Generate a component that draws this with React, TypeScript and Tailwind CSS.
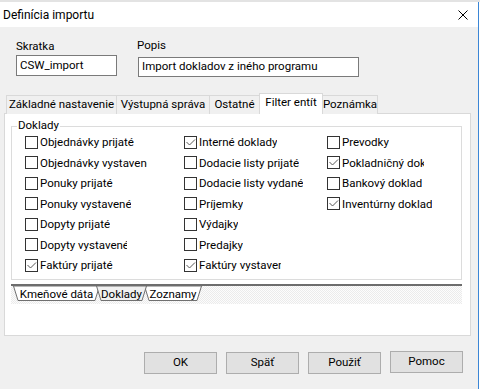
import clsx from "clsx";

type Item = { label: string; checked?: boolean; clip?: string };

const colA: Item[] = [
  { label: "Objednávky prijaté" },
  { label: "Objednávky vystavené", clip: "w-[107px]" },
  { label: "Ponuky prijaté" },
  { label: "Ponuky vystavené" },
  { label: "Dopyty prijaté" },
  { label: "Dopyty vystavené", clip: "w-[87px]" },
  { label: "Faktúry prijaté", checked: true },
];

const colB: Item[] = [
  { label: "Interné doklady", checked: true },
  { label: "Dodacie listy prijaté" },
  { label: "Dodacie listy vydané" },
  { label: "Príjemky" },
  { label: "Výdajky" },
  { label: "Predajky" },
  { label: "Faktúry vystavené", checked: true, clip: "w-[82px]" },
];

const colC: Item[] = [
  { label: "Prevodky" },
  { label: "Pokladničný doklad", checked: true, clip: "w-[82px]" },
  { label: "Bankový doklad" },
  { label: "Inventúrny doklad", checked: true },
];

function CheckBox({ label, checked, clip }: Item) {
  return (
    <div className="flex h-[20.5px] items-center">
      <span className="flex h-[13px] w-[13px] shrink-0 items-center justify-center border border-[#333333] bg-white">
        {checked && (
          <svg width="11" height="11" viewBox="0 0 11 11">
            <path d="M1.5 5 L4.5 8 L10 2.5" fill="none" stroke="#5a5a5a" strokeWidth="1" />
          </svg>
        )}
      </span>
      <span className={clsx("ml-[2px] overflow-hidden whitespace-nowrap leading-[14px]", clip)}>{label}</span>
    </div>
  );
}

function TopTab({ label, width, active, last }: { label: string; width: string; active?: boolean; last?: boolean }) {
  if (active) {
    return (
      <div
        className={clsx(
          "relative z-10 flex h-[21px] items-center justify-center border-x border-t border-[#d9d9d9] bg-white pb-[2px]",
          width
        )}>
        {label}
      </div>
    );
  }
  return (
    <div
      className={clsx(
        "flex h-[19px] items-center justify-center border-t border-[#d9d9d9] bg-[#f0f0f0]",
        last ? "border-r" : "border-l",
        width
      )}>
      {label}
    </div>
  );
}

function SheetTab({ label, w, active, className }: { label: string; w: number; active?: boolean; className?: string }) {
  return (
    <div className={clsx("relative flex h-[15px] items-center justify-center", active && "z-10", className)} style={{ width: w }}>
      <svg className="absolute inset-0" width={w} height={15} viewBox={`0 0 ${w} 15`}>
        <polygon
          points={`0.5,0 5,14.5 ${w - 5},14.5 ${w - 0.5},0`}
          fill={active ? "#f0f0f0" : "#ffffff"}
          stroke="#707070"
          strokeWidth="1"
        />
      </svg>
      <span className="relative leading-[14px]">{label}</span>
    </div>
  );
}

function Button({ label, className }: { label: string; className?: string }) {
  return (
    <div
      className={clsx(
        "flex h-[22px] w-[73px] items-center justify-center border border-[#adadad] bg-[#e1e1e1]",
        className
      )}>
      {label}
    </div>
  );
}

export default function App() {
  return (
    <div className="flex h-[389px] w-[480px] flex-col overflow-hidden bg-white font-[Roboto,sans-serif] text-[11.5px] text-black">
      <div className="h-[2px] bg-[#e3e3e3]" />
      <div className="flex flex-1">
        <div className="flex w-[479px] flex-col border-r border-[#3b86d6]">
          {/* title bar */}
          <div className="flex h-[25px] items-center justify-between bg-white pl-[3px] pr-[10px] text-[12px]">
            <span>Definícia importu</span>
            <svg width="10" height="10" viewBox="0 0 10 10">
              <path d="M0.5 0.5 L9.5 9.5 M9.5 0.5 L0.5 9.5" stroke="#000" strokeWidth="1" />
            </svg>
          </div>

          {/* body */}
          <div className="flex-1 bg-[#f0f0f0] pl-[4px]">
            <div className="flex items-start gap-[20px] pl-[12px]">
              <div className="mt-[12px] flex flex-col">
                <span className="leading-[15px]">Skratka</span>
                <div className="mt-px flex h-[21px] w-[101px] items-center border border-[#7a7a7a] bg-white pl-[3px]">
                  CSW_import
                </div>
              </div>
              <div className="mt-[11px] flex flex-col">
                <span className="leading-[15px]">Popis</span>
                <div className="ml-px mt-[4px] flex h-[20px] w-[221px] items-center border border-[#7a7a7a] bg-white pl-[3px]">
                  Import dokladov z iného programu
                </div>
              </div>
            </div>

            {/* tabs */}
            <div className="mt-[16px] flex h-[21px] items-end pl-[2px]">
              <TopTab label="Základné nastavenie" width="w-[110px]" />
              <TopTab label="Výstupná správa" width="w-[93px]" />
              <TopTab label="Ostatné" width="w-[50px]" />
              <TopTab label="Filter entít" width="w-[64px]" active />
              <TopTab label="Poznámka" width="w-[55px]" last />
            </div>

            <div className="-mt-px h-[223px] w-[467px] border border-[#d9d9d9] bg-white">
              <div className="relative ml-[6px] mt-[12px] h-[154px] w-[451px] border border-[#dcdcdc] pl-[13px] pt-[5px]">
                <span className="absolute left-[5px] top-[-9px] bg-white px-px leading-[15px]">Doklady</span>
                <div className="flex">
                  <div className="flex w-[159px] flex-col">
                    {colA.map((i) => (
                      <CheckBox key={i.label} {...i} />
                    ))}
                  </div>
                  <div className="flex w-[143px] flex-col">
                    {colB.map((i) => (
                      <CheckBox key={i.label} {...i} />
                    ))}
                  </div>
                  <div className="flex flex-col">
                    {colC.map((i) => (
                      <CheckBox key={i.label} {...i} />
                    ))}
                  </div>
                </div>
              </div>

              {/* sheet tabs */}
              <div className="ml-[6px] mt-[4px] w-[451px] border-t-2 border-[#6d6d6d]">
                <div className="flex h-[18px] bg-[repeating-conic-gradient(#ebebeb_0_25%,#fcfcfc_0_50%)] bg-size-[2px_2px] pl-[2px]">
                  <SheetTab label="Kmeňové dáta" w={87} />
                  <SheetTab label="Doklady" w={51} active className="-ml-[4px]" />
                  <SheetTab label="Zoznamy" w={58} className="-ml-[3px]" />
                </div>
              </div>
            </div>

            {/* buttons */}
            <div className="mt-[16px] flex items-start gap-[9px] pl-[140px]">
              <Button label="OK" />
              <Button label="Späť" />
              <Button label="Použiť" />
              <Button label="Pomoc" className="-mt-px" />
            </div>
          </div>
        </div>
      </div>
    </div>
  );
}
